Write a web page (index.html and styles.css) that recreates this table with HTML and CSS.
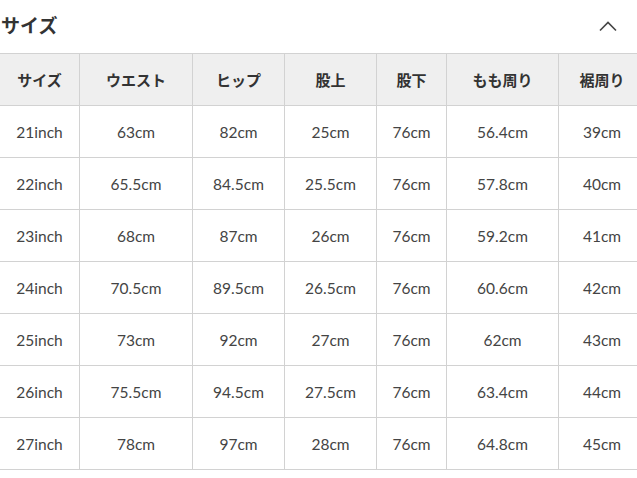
FILE: index.html
```html
<!DOCTYPE html>
<html lang="ja">
<head>
<meta charset="utf-8">
<link rel="stylesheet" href="styles.css">
</head>
<body>
<div class="panel">
  <div class="panel-head">
    <h2 class="panel-title">サイズ</h2>
    <svg class="chevron" width="20" height="12" viewBox="0 0 20 12"><path d="M2 10.5 L10 2.5 L18 10.5" fill="none" stroke="#444" stroke-width="1.6"/></svg>
  </div>
  <table class="size-table">
    <colgroup>
      <col class="c1"><col class="c2"><col class="c3"><col class="c4"><col class="c5"><col class="c6"><col class="c7">
    </colgroup>
    <thead>
      <tr><th>サイズ</th><th>ウエスト</th><th>ヒップ</th><th>股上</th><th>股下</th><th>もも周り</th><th>裾周り</th></tr>
    </thead>
    <tbody>
      <tr><td>21inch</td><td>63cm</td><td>82cm</td><td>25cm</td><td>76cm</td><td>56.4cm</td><td>39cm</td></tr>
      <tr><td>22inch</td><td>65.5cm</td><td>84.5cm</td><td>25.5cm</td><td>76cm</td><td>57.8cm</td><td>40cm</td></tr>
      <tr><td>23inch</td><td>68cm</td><td>87cm</td><td>26cm</td><td>76cm</td><td>59.2cm</td><td>41cm</td></tr>
      <tr><td>24inch</td><td>70.5cm</td><td>89.5cm</td><td>26.5cm</td><td>76cm</td><td>60.6cm</td><td>42cm</td></tr>
      <tr><td>25inch</td><td>73cm</td><td>92cm</td><td>27cm</td><td>76cm</td><td>62cm</td><td>43cm</td></tr>
      <tr><td>26inch</td><td>75.5cm</td><td>94.5cm</td><td>27.5cm</td><td>76cm</td><td>63.4cm</td><td>44cm</td></tr>
      <tr><td>27inch</td><td>78cm</td><td>97cm</td><td>28cm</td><td>76cm</td><td>64.8cm</td><td>45cm</td></tr>
    </tbody>
  </table>
</div>
</body>
</html>
```

FILE: styles.css
```css
html, body {
  margin: 0;
  padding: 0;
  background: #fff;
  overflow: hidden;
}
body {
  width: 637px;
  height: 478px;
  font-family: Lato, "Noto Sans CJK JP", sans-serif;
  color: #333;
}
.panel-head {
  height: 53px;
  display: flex;
  align-items: center;
  justify-content: space-between;
  padding: 0 19px 0 1px;
  box-sizing: border-box;
}
.panel-title {
  margin: 0 0 4px 0;
  font-family: "Noto Sans CJK JP", sans-serif;
  font-size: 19px;
  font-weight: 700;
  color: #333;
  line-height: 1;
}
.chevron {
  display: block;
  margin-bottom: 2px;
}
.size-table {
  border-collapse: collapse;
  table-layout: fixed;
  width: 646px;
  margin-left: -1px;
}
.c1 { width: 80px; }
.c2 { width: 113px; }
.c3 { width: 92px; }
.c4 { width: 92px; }
.c5 { width: 70px; }
.c6 { width: 112px; }
.c7 { width: 87px; }
.size-table th,
.size-table td {
  border: 1px solid #d2d2d2;
  height: 52px;
  padding: 0;
  text-align: center;
  vertical-align: middle;
  font-size: 15px;
  box-sizing: border-box;
}
.size-table th {
  background: #efefef;
  font-family: "Noto Sans CJK JP", sans-serif;
  font-weight: 700;
  color: #333;
}
.size-table td {
  font-size: 15.5px;
  color: #444;
  font-weight: 400;
}
```
